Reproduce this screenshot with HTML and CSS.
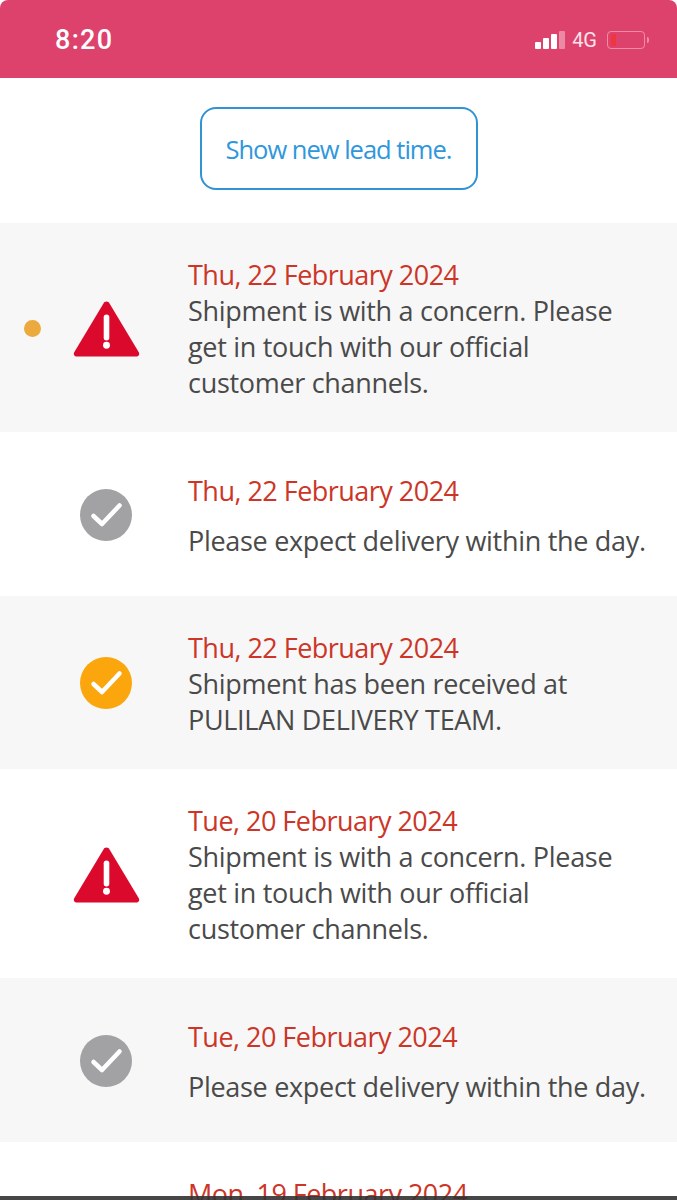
FILE: index.html
```html
<!DOCTYPE html>
<html lang="en">
<head>
  <meta charset="UTF-8" />
  <title>Shipment tracking</title>
  <link rel="stylesheet" href="styles.css">
</head>
<body>

  <header class="status-bar">
    <span class="clock">8:20</span>
    <div class="status-icons">
      <div class="signal">
        <span class="bar bar-1"></span>
        <span class="bar bar-2"></span>
        <span class="bar bar-3"></span>
        <span class="bar bar-4"></span>
      </div>
      <span class="network">4G</span>
      <div class="battery"><span class="battery-level"></span></div>
      <span class="battery-tip"></span>
    </div>
  </header>

  <div class="lead-time">
    <button class="lead-button">Show new lead time.</button>
  </div>

  <div class="timeline">
    <!-- latest -->
    <div class="event shaded">
      <div class="marker"><span class="dot"></span></div>
      <div class="icon">
        <svg class="warn" viewBox="0 0 66 56"><path d="M33 1.500c1.400 0 2.300.7 3 1.800l28.800 48c1.100 1.900-.1 4.200-2.300 4.200H3.500c-2.200 0-3.400-2.300-2.300-4.200L30 3.300c.7-1.100 1.600-1.800 3-1.800z" fill="#db0a2c"/><path d="M33 17v20" stroke="#fff" stroke-width="5.500" stroke-linecap="round" fill="none"/><circle cx="33" cy="44.500" r="3.400" fill="#fff"/></svg>
      </div>
      <div class="text">
        <div class="date">Thu, 22 February 2024</div>
        <div class="message">Shipment is with a concern. Please<br>get in touch with our official<br>customer channels.</div>
      </div>
    </div>

    <div class="event single">
      <div class="marker"></div>
      <div class="icon">
        <svg class="check" viewBox="0 0 52 52"><circle cx="26" cy="26" r="26" fill="#a2a1a3"/><path d="M13.500 27l8.500 8 17.500-18.500" stroke="#fff" stroke-width="4.500" stroke-linecap="round" stroke-linejoin="round" fill="none"/></svg>
      </div>
      <div class="text">
        <div class="date">Thu, 22 February 2024</div>
        <div class="message">Please expect delivery within the day.</div>
      </div>
    </div>

    <div class="event shaded">
      <div class="marker"></div>
      <div class="icon">
        <svg class="check" viewBox="0 0 52 52"><circle cx="26" cy="26" r="26" fill="#fba60c"/><path d="M13.500 27l8.500 8 17.500-18.500" stroke="#fff" stroke-width="4.500" stroke-linecap="round" stroke-linejoin="round" fill="none"/></svg>
      </div>
      <div class="text">
        <div class="date">Thu, 22 February 2024</div>
        <div class="message">Shipment has been received at<br>PULILAN DELIVERY TEAM.</div>
      </div>
    </div>

    <div class="event">
      <div class="marker"></div>
      <div class="icon">
        <svg class="warn" viewBox="0 0 66 56"><path d="M33 1.500c1.400 0 2.300.7 3 1.800l28.800 48c1.100 1.900-.1 4.200-2.300 4.200H3.500c-2.200 0-3.400-2.300-2.300-4.200L30 3.300c.7-1.100 1.600-1.800 3-1.800z" fill="#db0a2c"/><path d="M33 17v20" stroke="#fff" stroke-width="5.500" stroke-linecap="round" fill="none"/><circle cx="33" cy="44.500" r="3.400" fill="#fff"/></svg>
      </div>
      <div class="text">
        <div class="date">Tue, 20 February 2024</div>
        <div class="message">Shipment is with a concern. Please<br>get in touch with our official<br>customer channels.</div>
      </div>
    </div>

    <div class="event shaded single">
      <div class="marker"></div>
      <div class="icon">
        <svg class="check" viewBox="0 0 52 52"><circle cx="26" cy="26" r="26" fill="#a2a1a3"/><path d="M13.500 27l8.500 8 17.500-18.500" stroke="#fff" stroke-width="4.500" stroke-linecap="round" stroke-linejoin="round" fill="none"/></svg>
      </div>
      <div class="text">
        <div class="date">Tue, 20 February 2024</div>
        <div class="message">Please expect delivery within the day.</div>
      </div>
    </div>

    <div class="event">
      <div class="marker"></div>
      <div class="icon"></div>
      <div class="text">
        <div class="date">Mon, 19 February 2024</div>
      </div>
    </div>
  </div>

  <div class="home-edge"></div>

</body>
</html>
```

FILE: styles.css
```css
html, body {
  margin: 0;
  padding: 0;
  height: 1200px;
  overflow: hidden;
}

body {
  position: relative;
  font-family: 'Open Sans', sans-serif;
  background: #fff;
  color: #4a4a4a;
}

/* status bar */
.status-bar {
  height: 78px;
  background: #dd426d;
  border-radius: 8px 8px 0 0;
  color: #fff;
  display: flex;
  align-items: center;
  justify-content: space-between;
  padding: 2px 28px 0 55px;
  box-sizing: border-box;
}

.clock {
  font-family: Roboto, sans-serif;
  font-size: 27px;
  font-weight: 500;
  letter-spacing: 1.3px;
}

.status-icons {
  display: flex;
  align-items: center;
}

.signal {
  display: flex;
  align-items: flex-end;
  gap: 2px;
  height: 18px;
}

.bar {
  width: 6px;
  background: #fff;
  border-radius: 1px;
}

.bar-1 { height: 7px; }
.bar-2 { height: 11px; }
.bar-3 { height: 15px; }
.bar-4 { height: 18px; background: #ec8aa5; }

.network {
  font-family: Roboto, sans-serif;
  font-size: 20px;
  margin: 0 10px 0 7px;
  color: #fbe3ea;
}

.battery {
  width: 38px;
  height: 18px;
  border: 1.5px solid #f28ba6;
  border-radius: 4px;
  padding: 2px 3px;
  box-sizing: border-box;
}

.battery-level {
  display: block;
  width: 5px;
  height: 100%;
  background: #f0353f;
  border-radius: 1px;
}

.battery-tip {
  width: 2px;
  height: 6px;
  background: #f28ba6;
  border-radius: 0 2px 2px 0;
  margin-left: 2px;
}

/* button block */
.lead-time {
  height: 145px;
  padding-top: 29px;
  box-sizing: border-box;
  text-align: center;
}

.lead-button {
  width: 278px;
  height: 83px;
  background: #fff;
  border: 2px solid #3293d2;
  border-radius: 16px;
  color: #2f97dc;
  font-family: 'Open Sans', sans-serif;
  font-size: 25.5px;
  letter-spacing: -1px;
  padding: 0;
}

/* timeline rows */
.event {
  display: grid;
  grid-template-columns: 65px 82px 1fr;
  padding: 34px 0 31px 0;
}

.event.shaded {
  background: #f7f7f7;
}

.marker, .icon {
  display: flex;
  align-items: center;
  justify-content: center;
  padding-bottom: 2px;
}

.dot {
  width: 17px;
  height: 17px;
  border-radius: 50%;
  background: #eba93e;
}

.warn {
  width: 67px;
  height: 57px;
}

.check {
  width: 52px;
  height: 52px;
}

.text {
  padding-left: 41px;
  font-size: 27px;
  line-height: 36px;
}

.date {
  color: #cc3527;
  letter-spacing: -0.52px;
}

.message {
  letter-spacing: -0.3px;
}

.single {
  padding-top: 41px;
  padding-bottom: 37px;
}

.single .message {
  margin-top: 14px;
}

.home-edge {
  position: absolute;
  left: 0;
  right: 0;
  bottom: 0;
  height: 4px;
  background: rgba(50, 50, 50, 0.9);
}
```
